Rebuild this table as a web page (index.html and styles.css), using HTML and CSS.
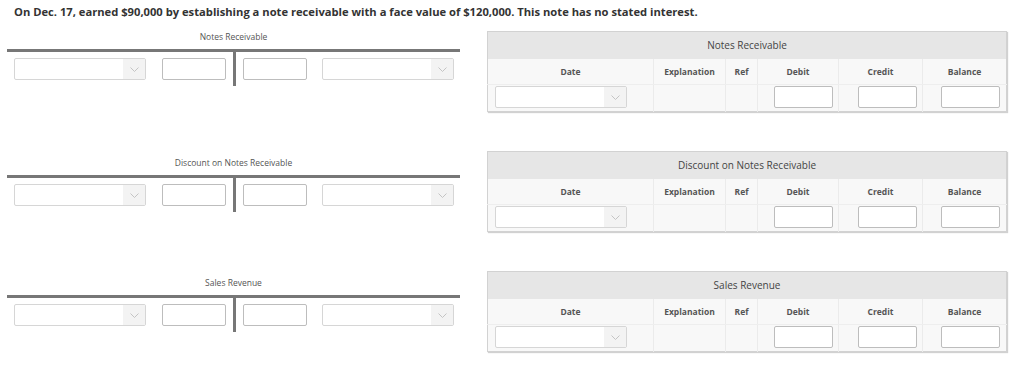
FILE: index.html
```html
<html>
<head>
  <meta charset="utf-8">
  <link rel="stylesheet" href="styles.css">
</head>
<body>
  <p class="prompt">On Dec. 17, earned $90,000 by establishing a note receivable with a face value of $120,000. This note has no stated interest.</p>

  <div class="work">
    <!-- T-accounts -->
    <div class="taccounts">
      <div class="taccount">
        <div class="t-title">Notes Receivable</div>
        <div class="t-body">
          <div class="pick"><span class="pick-arrow"><svg width="9" height="5" viewBox="0 0 9 5"><polyline points="0.5,0.5 4.5,4.5 8.5,0.5" /></svg></span></div>
          <input class="amount amount-left" type="text">
          <div class="t-bar"></div>
          <input class="amount amount-right" type="text">
          <div class="pick pick-right"><span class="pick-arrow"><svg width="9" height="5" viewBox="0 0 9 5"><polyline points="0.5,0.5 4.5,4.5 8.5,0.5" /></svg></span></div>
        </div>
      </div>
      <div class="taccount">
        <div class="t-title">Discount on Notes Receivable</div>
        <div class="t-body">
          <div class="pick"><span class="pick-arrow"><svg width="9" height="5" viewBox="0 0 9 5"><polyline points="0.5,0.5 4.5,4.5 8.5,0.5" /></svg></span></div>
          <input class="amount amount-left" type="text">
          <div class="t-bar"></div>
          <input class="amount amount-right" type="text">
          <div class="pick pick-right"><span class="pick-arrow"><svg width="9" height="5" viewBox="0 0 9 5"><polyline points="0.5,0.5 4.5,4.5 8.5,0.5" /></svg></span></div>
        </div>
      </div>
      <div class="taccount">
        <div class="t-title">Sales Revenue</div>
        <div class="t-body">
          <div class="pick"><span class="pick-arrow"><svg width="9" height="5" viewBox="0 0 9 5"><polyline points="0.5,0.5 4.5,4.5 8.5,0.5" /></svg></span></div>
          <input class="amount amount-left" type="text">
          <div class="t-bar"></div>
          <input class="amount amount-right" type="text">
          <div class="pick pick-right"><span class="pick-arrow"><svg width="9" height="5" viewBox="0 0 9 5"><polyline points="0.5,0.5 4.5,4.5 8.5,0.5" /></svg></span></div>
        </div>
      </div>
    </div>

    <!-- ledger tables -->
    <div class="ledgers">
      <table class="ledger">
        <colgroup>
          <col class="c-date"><col class="c-expl"><col class="c-ref"><col class="c-debit"><col class="c-credit"><col class="c-balance">
        </colgroup>
        <tr class="ledger-title"><th colspan="6">Notes Receivable</th></tr>
        <tr class="ledger-head"><th>Date</th><th>Explanation</th><th>Ref</th><th>Debit</th><th>Credit</th><th>Balance</th></tr>
        <tr class="ledger-row">
          <td class="date-cell"><div class="pick"><span class="pick-arrow"><svg width="9" height="5" viewBox="0 0 9 5"><polyline points="0.5,0.5 4.5,4.5 8.5,0.5" /></svg></span></div></td>
          <td></td><td></td>
          <td class="num-cell"><input class="amount" type="text"></td>
          <td class="num-cell"><input class="amount" type="text"></td>
          <td class="num-cell bal-cell"><input class="amount" type="text"></td>
        </tr>
      </table>
      <table class="ledger">
        <colgroup>
          <col class="c-date"><col class="c-expl"><col class="c-ref"><col class="c-debit"><col class="c-credit"><col class="c-balance">
        </colgroup>
        <tr class="ledger-title"><th colspan="6">Discount on Notes Receivable</th></tr>
        <tr class="ledger-head"><th>Date</th><th>Explanation</th><th>Ref</th><th>Debit</th><th>Credit</th><th>Balance</th></tr>
        <tr class="ledger-row">
          <td class="date-cell"><div class="pick"><span class="pick-arrow"><svg width="9" height="5" viewBox="0 0 9 5"><polyline points="0.5,0.5 4.5,4.5 8.5,0.5" /></svg></span></div></td>
          <td></td><td></td>
          <td class="num-cell"><input class="amount" type="text"></td>
          <td class="num-cell"><input class="amount" type="text"></td>
          <td class="num-cell bal-cell"><input class="amount" type="text"></td>
        </tr>
      </table>
      <table class="ledger">
        <colgroup>
          <col class="c-date"><col class="c-expl"><col class="c-ref"><col class="c-debit"><col class="c-credit"><col class="c-balance">
        </colgroup>
        <tr class="ledger-title"><th colspan="6">Sales Revenue</th></tr>
        <tr class="ledger-head"><th>Date</th><th>Explanation</th><th>Ref</th><th>Debit</th><th>Credit</th><th>Balance</th></tr>
        <tr class="ledger-row">
          <td class="date-cell"><div class="pick"><span class="pick-arrow"><svg width="9" height="5" viewBox="0 0 9 5"><polyline points="0.5,0.5 4.5,4.5 8.5,0.5" /></svg></span></div></td>
          <td></td><td></td>
          <td class="num-cell"><input class="amount" type="text"></td>
          <td class="num-cell"><input class="amount" type="text"></td>
          <td class="num-cell bal-cell"><input class="amount" type="text"></td>
        </tr>
      </table>
    </div>
  </div>
</body>
</html>
```

FILE: styles.css
```css
body {
  margin: 0;
  background: #fff;
  font-family: "Open Sans", "Liberation Sans", sans-serif;
  color: #333;
}
.prompt {
  margin: 5px 0 0 14px;
  font-size: 11.2px;
  font-weight: bold;
  line-height: 13px;
  color: #333;
}
.work {
  display: flex;
  margin-top: 13px;
}

/* dropdown and amount boxes */
.pick {
  box-sizing: border-box;
  flex: none;
  width: 132px;
  height: 22px;
  border: 1px solid #d6d6d6;
  border-radius: 2px;
  background: #fff;
  display: flex;
  justify-content: flex-end;
}
.pick-arrow {
  width: 22px;
  background: #f3f3f3;
  display: flex;
  align-items: center;
  justify-content: center;
}
.pick-arrow svg {
  fill: none;
  stroke: #c4c4c4;
  stroke-width: 1;
}
.amount {
  box-sizing: border-box;
  flex: none;
  width: 64px;
  height: 22px;
  margin: 0;
  padding: 0;
  border: 1px solid #bdbdbd;
  border-radius: 2px;
  background: #fff;
}

/* T-accounts on the left */
.taccounts {
  width: 453px;
  margin-left: 7px;
  display: flex;
  flex-direction: column;
}
.taccount:nth-child(2) {
  margin-top: 71px;
}
.taccount:nth-child(3) {
  margin-top: 65px;
}
.t-title {
  font-size: 8.5px;
  line-height: 12px;
  text-align: center;
  color: #555;
  border-bottom: 3px solid #777;
  padding-bottom: 6px;
}
.t-body {
  display: flex;
  height: 34px;
  padding-left: 7px;
}
.t-body .pick,
.t-body .amount {
  margin-top: 6px;
}
.t-body .amount-left {
  margin-left: 16px;
}
.t-bar {
  flex: none;
  width: 3px;
  background: #777;
  margin: 0 7px;
}
.t-body .pick-right {
  margin-left: 15px;
}

/* ledger tables on the right */
.ledgers {
  margin-left: 27px;
  display: flex;
  flex-direction: column;
  gap: 39px;
}
.ledger {
  width: 519px;
  border-collapse: collapse;
  table-layout: fixed;
  border: 1px solid #d2d2d2;
  box-shadow: 1px 1px 1px rgba(0, 0, 0, 0.18);
}
.c-date { width: 166px; }
.c-expl { width: 72px; }
.c-ref { width: 32px; }
.c-debit { width: 81px; }
.c-credit { width: 84px; }
.c-balance { width: 84px; }
.ledger-title th {
  height: 27px;
  padding: 0;
  background: #e6e6e6;
  font-size: 10px;
  font-weight: normal;
  color: #444;
}
.ledger-head th {
  height: 26px;
  padding: 0;
  background: #f8f8f8;
  font-size: 8.5px;
  font-weight: bold;
  color: #555;
  border-left: 1px solid #ebebeb;
  border-bottom: 1px solid #eeeeee;
}
.ledger-head th:first-child {
  border-left: none;
}
.ledger-row td {
  height: 27px;
  padding: 0;
  background: #f8f8f8;
  border-left: 1px solid #ebebeb;
  vertical-align: top;
}
.ledger-row td:first-child {
  border-left: none;
}
.date-cell .pick {
  margin: 1px 0 0 7px;
}
.num-cell .amount {
  display: block;
  width: 59px;
  margin: 1px 5px 0 auto;
}
.bal-cell .amount {
  margin-right: 6px;
}
```
